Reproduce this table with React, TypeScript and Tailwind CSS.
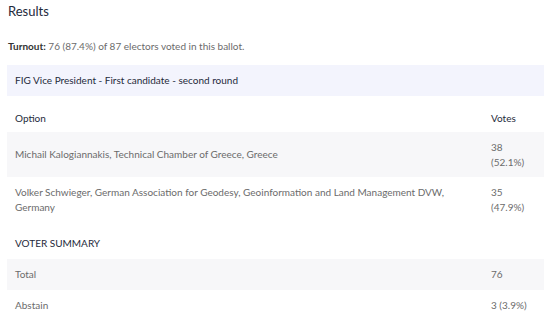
import React from "react";

export default function App() {
  const font = { fontFamily: 'Lato, "Open Sans", sans-serif' };
  return (
    <div className="w-[550px] h-[331px] bg-white overflow-hidden" style={font}>
      <div className="pl-[7px] pr-[6px]">
        <div className="pl-[1px] pt-[2px] text-[13px] leading-[18px] text-[#1e2a3b]">Results</div>
        <div className="pl-[1px] mt-[19px] text-[10px] leading-[15px] text-[#6b6b6b]">
          <span className="font-bold text-[#333]">Turnout:</span> 76 (87.4%) of 87 electors voted in this ballot.
        </div>
        <div className="mt-[11px] h-[31px] bg-[#f3f4fd] px-2 flex items-center text-[10px] text-[#1e2a3b]">
          FIG Vice President - First candidate - second round
        </div>
        <div className="flex mt-[4px] h-[32px] items-center pt-[4px] px-2 text-[10px] text-[#1e2a3b]">
          <div className="flex-1">Option</div>
          <div className="w-[45px]">Votes</div>
        </div>
        <div className="flex h-[45px] items-center px-2 bg-[#f7f7f9] text-[10px] leading-[15px] text-[#6b6b6b]">
          <div className="flex-1">Michail Kalogiannakis, Technical Chamber of Greece, Greece</div>
          <div className="w-[45px]">38<br />(52.1%)</div>
        </div>
        <div className="flex h-[45px] items-center px-2 text-[10px] leading-[15px] text-[#6b6b6b]">
          <div className="flex-1 pr-[30px]">
            Volker Schwieger, German Association for Geodesy, Geoinformation and Land Management DVW, Germany
          </div>
          <div className="w-[45px]">35<br />(47.9%)</div>
        </div>
        <div className="flex h-[37px] items-center pt-[6px] px-2 text-[10px] text-[#1e2a3b]">VOTER SUMMARY</div>
        <div className="flex h-[31px] items-center px-2 bg-[#f7f7f9] text-[10px] text-[#6b6b6b]">
          <div className="flex-1">Total</div>
          <div className="w-[45px]">76</div>
        </div>
        <div className="flex h-[31px] items-center px-2 text-[10px] text-[#6b6b6b]">
          <div className="flex-1">Abstain</div>
          <div className="w-[45px]">3 (3.9%)</div>
        </div>
      </div>
    </div>
  );
}
